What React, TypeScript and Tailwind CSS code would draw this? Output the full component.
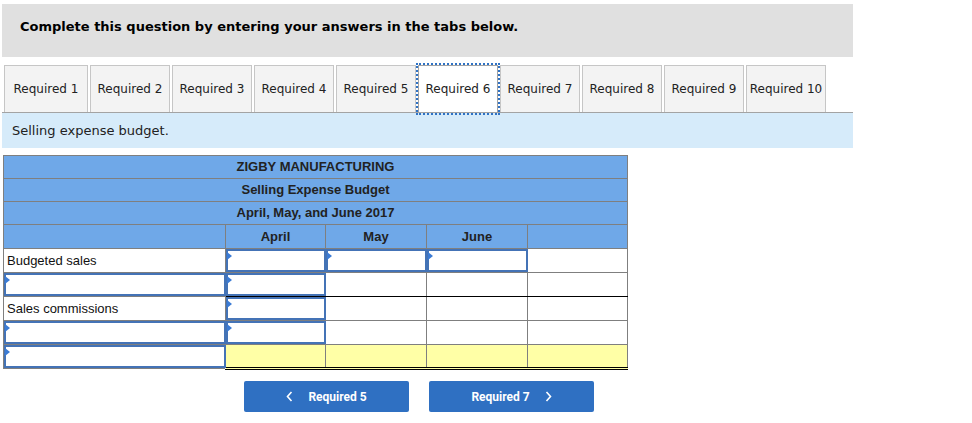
import React from "react";

const tabs = ["Required 1", "Required 2", "Required 3", "Required 4", "Required 5", "Required 6", "Required 7", "Required 8", "Required 9", "Required 10"];

function Field({ tri = true, w }: { tri?: boolean; w: string }) {
  return (
    <div className={`relative h-[23px] ${w} border-2 border-[#4473b6] bg-white`}>
      {tri && (
        <span className="absolute left-[-1px] top-[1px] h-0 w-0 border-y-[4px] border-l-[5px] border-y-transparent border-l-[#3b7bd4]" />
      )}
    </div>
  );
}

function Chevron({ dir }: { dir: "left" | "right" }) {
  return (
    <svg width="7" height="11" viewBox="0 0 7 11" fill="none" stroke="white" strokeWidth="1.6">
      {dir === "left" ? <polyline points="5.5,1 1.5,5.5 5.5,10" /> : <polyline points="1.5,1 5.5,5.5 1.5,10" />}
    </svg>
  );
}

export default function App() {
  const cell = "border border-[#7f7f7f] p-0 h-[24px] align-middle";
  const blk = "border-b-black";
  const total = "border-b-[3px] border-b-black border-double bg-[#ffffa6]";
  const titleRow = "bg-[#6fa8e8] text-center font-bold text-[13px] text-[#222] h-[23px] border border-[#7f7f7f]";

  return (
    <div className="min-h-screen bg-white pl-[2px] pt-[4px]" style={{ fontFamily: '"DejaVu Sans", Verdana, sans-serif' }}>
      <div className="w-[851px]">
        <div className="h-[53px] bg-[#e0e0e0] pl-[18px] pt-[13px] text-[13px] font-bold text-black">
          Complete this question by entering your answers in the tabs below.
        </div>

        <div className="mt-[8px] flex items-end gap-[2px] border-b border-[#a3a3a3] pl-[2px]">
          {tabs.map((t, i) =>
            i === 5 ? (
              <div
                key={t}
                className="mb-[-1px] flex h-[48px] w-[80px] items-center justify-center border border-[#a3a3a3] bg-white text-[12px] text-[#222] outline-2 outline-dotted outline-[#2f72c4]"
              >
                {t}
              </div>
            ) : (
              <div
                key={t}
                className={`flex h-[47px] ${i === 0 ? "w-[84px]" : "w-[80px]"} items-center justify-center border border-b-0 border-[#c6c6c6] bg-[#f3f3f3] text-[12px] text-[#222]`}
              >
                {t}
              </div>
            )
          )}
        </div>

        <div className="flex h-[35px] items-center bg-[#d6ebfa] pl-[10px] text-[13px] text-[#222]">Selling expense budget.</div>
      </div>

      <div className="mt-[7px] pl-[1px]" style={{ fontFamily: '"Liberation Sans", Arial, sans-serif' }}>
        <table className="w-[624px] table-fixed border-collapse border border-[#7f7f7f] text-[13px] text-[#111]">
          <colgroup>
            <col className="w-[222px]" />
            <col className="w-[100px]" />
            <col className="w-[101px]" />
            <col className="w-[101px]" />
            <col className="w-[100px]" />
          </colgroup>
          <tbody>
            <tr>
              <td colSpan={5} className={titleRow}>ZIGBY MANUFACTURING</td>
            </tr>
            <tr>
              <td colSpan={5} className={titleRow}>Selling Expense Budget</td>
            </tr>
            <tr>
              <td colSpan={5} className={titleRow}>April, May, and June 2017</td>
            </tr>
            <tr className="bg-[#6fa8e8] text-center font-bold text-[#222]">
              <td className={`${cell} h-[23px]`}></td>
              <td className={`${cell} h-[23px]`}>April</td>
              <td className={`${cell} h-[23px]`}>May</td>
              <td className={`${cell} h-[23px]`}>June</td>
              <td className={`${cell} h-[23px]`}></td>
            </tr>
            <tr>
              <td className={`${cell} pl-[3px]`}>Budgeted sales</td>
              <td className={cell}><Field w="w-[100px]" /></td>
              <td className={cell}><Field w="w-[101px]" /></td>
              <td className={cell}><Field w="w-[101px]" /></td>
              <td className={cell}></td>
            </tr>
            <tr>
              <td className={cell}><Field w="w-[222px]" /></td>
              <td className={`${cell} ${blk}`}><Field w="w-[100px]" /></td>
              <td className={`${cell} ${blk}`}></td>
              <td className={`${cell} ${blk}`}></td>
              <td className={`${cell} ${blk}`}></td>
            </tr>
            <tr>
              <td className={`${cell} pl-[3px]`}>Sales commissions</td>
              <td className={cell}><Field w="w-[100px]" /></td>
              <td className={cell}></td>
              <td className={cell}></td>
              <td className={cell}></td>
            </tr>
            <tr>
              <td className={cell}><Field w="w-[222px]" /></td>
              <td className={`${cell} ${blk}`}><Field w="w-[100px]" /></td>
              <td className={`${cell} ${blk}`}></td>
              <td className={`${cell} ${blk}`}></td>
              <td className={`${cell} ${blk}`}></td>
            </tr>
            <tr>
              <td className={cell}><Field w="w-[222px]" /></td>
              <td className={`${cell} ${total}`}></td>
              <td className={`${cell} ${total}`}></td>
              <td className={`${cell} ${total}`}></td>
              <td className={`${cell} ${total}`}></td>
            </tr>
          </tbody>
        </table>
      </div>

      <div className="mt-[11px] flex gap-[20px] pl-[242px]" style={{ fontFamily: 'Roboto, "Open Sans", sans-serif' }}>
        <button className="flex h-[31px] w-[165px] items-center justify-center gap-[15px] rounded-[2px] bg-[#2f70c2] text-[12px] font-bold text-white">
          <Chevron dir="left" />
          <span>Required 5</span>
        </button>
        <button className="flex h-[31px] w-[165px] items-center justify-center gap-[15px] rounded-[2px] bg-[#2f70c2] text-[12px] font-bold text-white">
          <span>Required 7</span>
          <Chevron dir="right" />
        </button>
      </div>
    </div>
  );
}
